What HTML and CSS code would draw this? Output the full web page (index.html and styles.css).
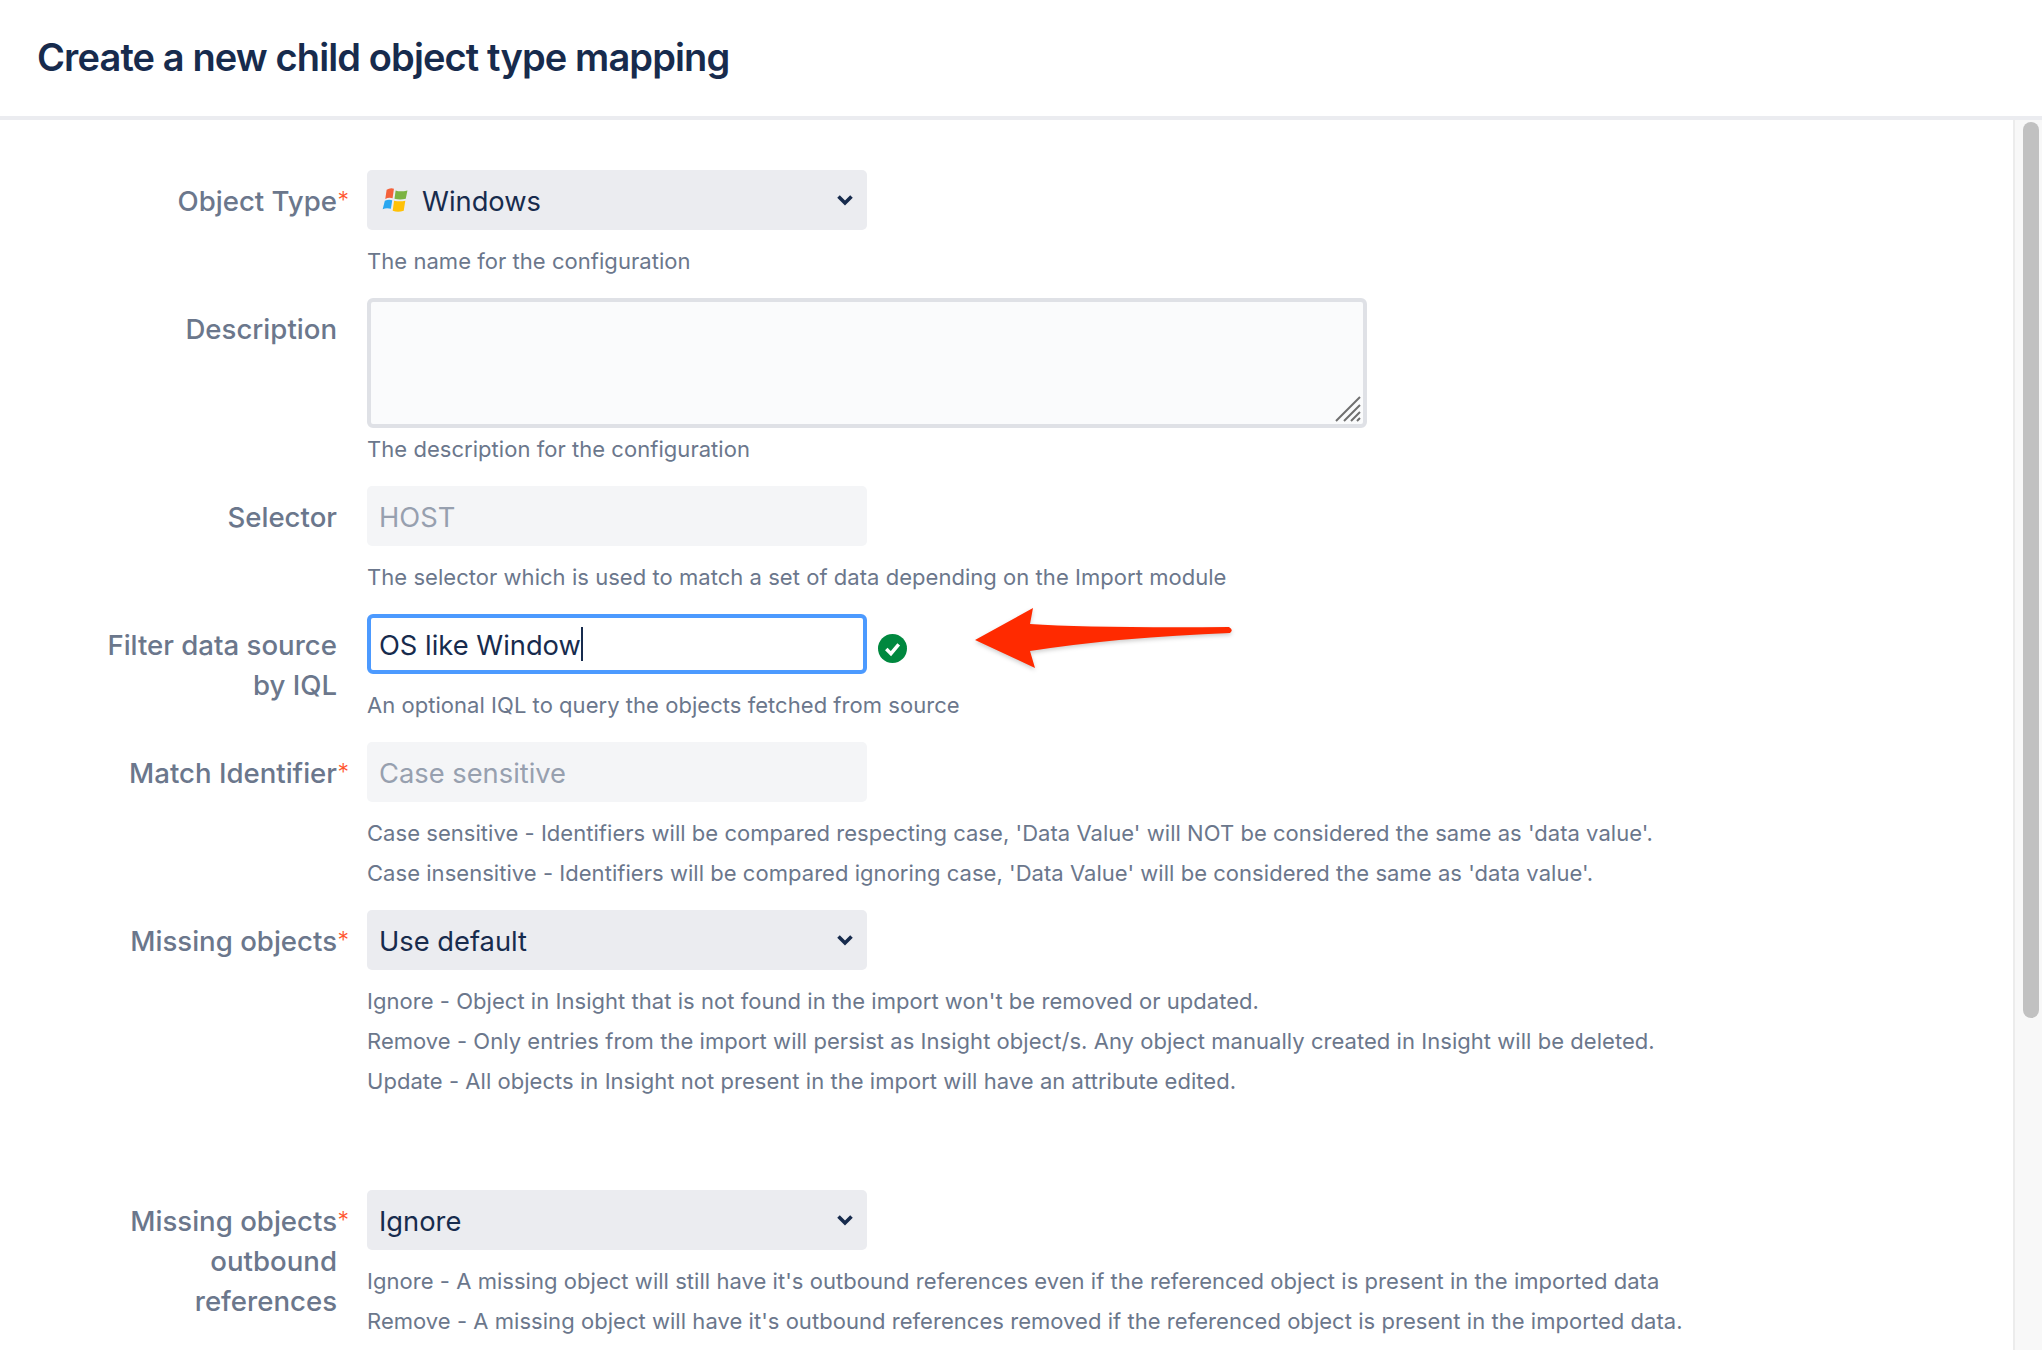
FILE: index.html
```html
<!DOCTYPE html>
<html lang="en">
<head>
<meta charset="UTF-8">
<title>Create a new child object type mapping</title>
<link rel="stylesheet" href="styles.css">
</head>
<body>

<header class="page-header">
    <h1>Create a new child object type mapping</h1>
</header>

<div class="page-body">
    <main class="form">

        <div class="field">
            <label class="field-label">Object Type<span class="req">*</span></label>
            <div class="field-main">
                <div class="select">
                    <svg class="win-icon" viewBox="0 0 24 24">
                        <path d="M5 2.5 Q8 .5 11.5 1.5 L10.3 10 Q7 9 3.8 10.6 Z" fill="#f4613a"/>
                        <path d="M13 3 Q17 4.5 23.5 3 L22 10.5 Q17 11.5 12 10.5 Z" fill="#7cb342"/>
                        <path d="M3.4 12.2 Q7 10.6 10 11.8 L8.8 19.4 Q4.5 18.4 1.5 19.8 Z" fill="#2aa7f0"/>
                        <path d="M11.6 12.2 Q17 13.2 21.6 12.2 L20.2 21 Q15 23 10.4 21 Z" fill="#ffc107"/>
                    </svg>
                    <span class="select-text">Windows</span>
                    <svg class="chevron" viewBox="0 0 18 12"><path d="M2.5 2.5 L9 9 L15.5 2.5" /></svg>
                </div>
                <p class="help">The name for the configuration</p>
            </div>
        </div>

        <div class="field">
            <label class="field-label">Description</label>
            <div class="field-main">
                <div class="textarea">
                    <svg class="resize" viewBox="0 0 26 26">
                        <path d="M1 25 L25 1 M9 25 L25 9 M16 25 L25 16 M22 25 L25 22" />
                    </svg>
                </div>
                <p class="help help-tight">The description for the configuration</p>
            </div>
        </div>

        <div class="field">
            <label class="field-label">Selector</label>
            <div class="field-main">
                <div class="input input-disabled"><span class="input-text">HOST</span></div>
                <p class="help">The selector which is used to match a set of data depending on the Import module</p>
            </div>
        </div>

        <div class="field">
            <label class="field-label">Filter data source by IQL</label>
            <div class="field-main">
                <div class="input-row">
                    <div class="input input-focus"><span class="input-text">OS like Window</span><span class="caret"></span></div>
                    <svg class="check" viewBox="0 0 28 28">
                        <circle cx="14" cy="14" r="14" fill="#00883f"/>
                        <path d="M8 14.5 L12.5 19 L20 10" fill="none" stroke="#fff" stroke-width="3.4"/>
                    </svg>
                </div>
                <p class="help">An optional IQL to query the objects fetched from source</p>
            </div>
        </div>

        <div class="field">
            <label class="field-label">Match Identifier<span class="req">*</span></label>
            <div class="field-main">
                <div class="input input-disabled"><span class="input-text">Case sensitive</span></div>
                <p class="help">Case sensitive - Identifiers will be compared respecting case, 'Data Value' will NOT be considered the same as 'data value'.</p>
                <p class="help-line">Case insensitive - Identifiers will be compared ignoring case, 'Data Value' will be considered the same as 'data value'.</p>
            </div>
        </div>

        <div class="field field-spaced">
            <label class="field-label">Missing objects<span class="req">*</span></label>
            <div class="field-main">
                <div class="select">
                    <span class="select-text">Use default</span>
                    <svg class="chevron" viewBox="0 0 18 12"><path d="M2.5 2.5 L9 9 L15.5 2.5" /></svg>
                </div>
                <p class="help">Ignore - Object in Insight that is not found in the import won't be removed or updated.</p>
                <p class="help-line">Remove - Only entries from the import will persist as Insight object/s. Any object manually created in Insight will be deleted.</p>
                <p class="help-line">Update - All objects in Insight not present in the import will have an attribute edited.</p>
            </div>
        </div>

        <div class="field">
            <label class="field-label">Missing objects<span class="req">*</span> outbound references</label>
            <div class="field-main">
                <div class="select">
                    <span class="select-text">Ignore</span>
                    <svg class="chevron" viewBox="0 0 18 12"><path d="M2.5 2.5 L9 9 L15.5 2.5" /></svg>
                </div>
                <p class="help">Ignore - A missing object will still have it's outbound references even if the referenced object is present in the imported data</p>
                <p class="help-line">Remove - A missing object will have it's outbound references removed if the referenced object is present in the imported data.</p>
            </div>
        </div>

    </main>

    <div class="scrollbar"><div class="scroll-thumb"></div></div>
</div>

<!-- red annotation arrow on top of the screenshot -->
<svg class="arrow" viewBox="0 0 270 70">
    <path d="M4 37 L62 5 L59 21 Q120 25 258 24 Q263 27 259 30 Q150 34 59 48 L64 65 Z" fill="#ff2a00"/>
</svg>

</body>
</html>
```

FILE: styles.css
```css
* {
    box-sizing: border-box;
}
html, body {
    height: 100%;
}
body {
    margin: 0;
    height: 1350px;
    overflow: hidden;
    position: relative;
    display: flex;
    flex-direction: column;
    font-family: Inter, "Liberation Sans", sans-serif;
    background: #fff;
    color: #172b4d;
}

.page-header {
    height: 120px;
    flex: none;
    padding: 0 37px 2px;
    display: flex;
    align-items: center;
    border-bottom: 4px solid #ebecf0;
}
.page-header h1 {
    margin: 0;
    font-size: 38px;
    font-weight: 600;
    letter-spacing: -0.88px;
}

.page-body {
    flex: 1;
    display: flex;
    min-height: 0;
    overflow: hidden;
}
.form {
    flex: 1;
    padding-top: 50px;
}

/* one row: label on the left, control and help on the right */
.field {
    display: grid;
    grid-template-columns: 337px 1fr;
    column-gap: 30px;
    margin-bottom: 17px;
}
.field-spaced {
    margin-bottom: 89px;
}
.field-label {
    padding-top: 11px;
    padding-left: 90px;
    text-align: right;
    font-size: 27.6px;
    line-height: 40px;
    font-weight: 500;
    color: #6b778c;
}
.req {
    color: #ff5630;
    font-size: 23px;
    font-weight: 300;
    margin-right: -12px;
    display: inline-block;
    width: 12px;
    text-align: right;
    vertical-align: 3px;
    line-height: 1;
}

.select, .input {
    width: 500px;
    height: 60px;
    border-radius: 5px;
    display: flex;
    align-items: center;
    font-size: 27.3px;
}
.select {
    background: #ebecf0;
    padding: 2px 13px 0 12px;
    color: #172b4d;
}
.select-text {
    flex: 1;
}
.win-icon {
    width: 27px;
    height: 27px;
    margin: -2px 14px 0 2px;
    flex: none;
}
.chevron {
    width: 18px;
    height: 12px;
    flex: none;
    margin-top: -3px;
}
.chevron path {
    fill: none;
    stroke: #172b4d;
    stroke-width: 3.6;
}

.textarea {
    position: relative;
    width: 1000px;
    height: 130px;
    background: #fafbfc;
    border: 4px solid #dfe1e6;
    border-radius: 6px;
}
.resize {
    position: absolute;
    right: 2px;
    bottom: 2px;
    width: 26px;
    height: 26px;
}
.resize path {
    fill: none;
    stroke: #6f6f6f;
    stroke-width: 2;
}

.input {
    padding: 0 12px;
}
.input-text {
    padding-top: 2px;
}
.input-disabled {
    background: #f4f5f7;
    color: #97a0af;
}
.input-row {
    display: flex;
    align-items: center;
}
.input-focus {
    background: #fff;
    border: 4px solid #4c9aff;
    border-radius: 6px;
    padding: 0 8px;
    color: #172b4d;
}
.caret {
    display: inline-block;
    width: 2px;
    height: 34px;
    background: #172b4d;
}
.check {
    width: 29px;
    height: 29px;
    margin: 8px 0 0 11px;
    flex: none;
}

.help, .help-line {
    margin: 0;
    font-size: 22px;
    line-height: 40px;
    letter-spacing: 0.04px;
    color: #6b778c;
}
.help {
    margin-top: 11px;
}
.help-tight {
    margin-top: 1px;
}

.scrollbar {
    width: 29px;
    flex: none;
    padding: 2px 5px 0 8px;
    background: #f8f8f8;
    border-left: 2px solid #ececec;
}
.scroll-thumb {
    width: 16px;
    height: 896px;
    background: #c1c1c1;
    border-radius: 8px;
}

.arrow {
    position: absolute;
    left: 971px;
    top: 603px;
    width: 270px;
    height: 70px;
    filter: drop-shadow(0 2px 2px rgba(0, 0, 0, 0.2));
}
```
